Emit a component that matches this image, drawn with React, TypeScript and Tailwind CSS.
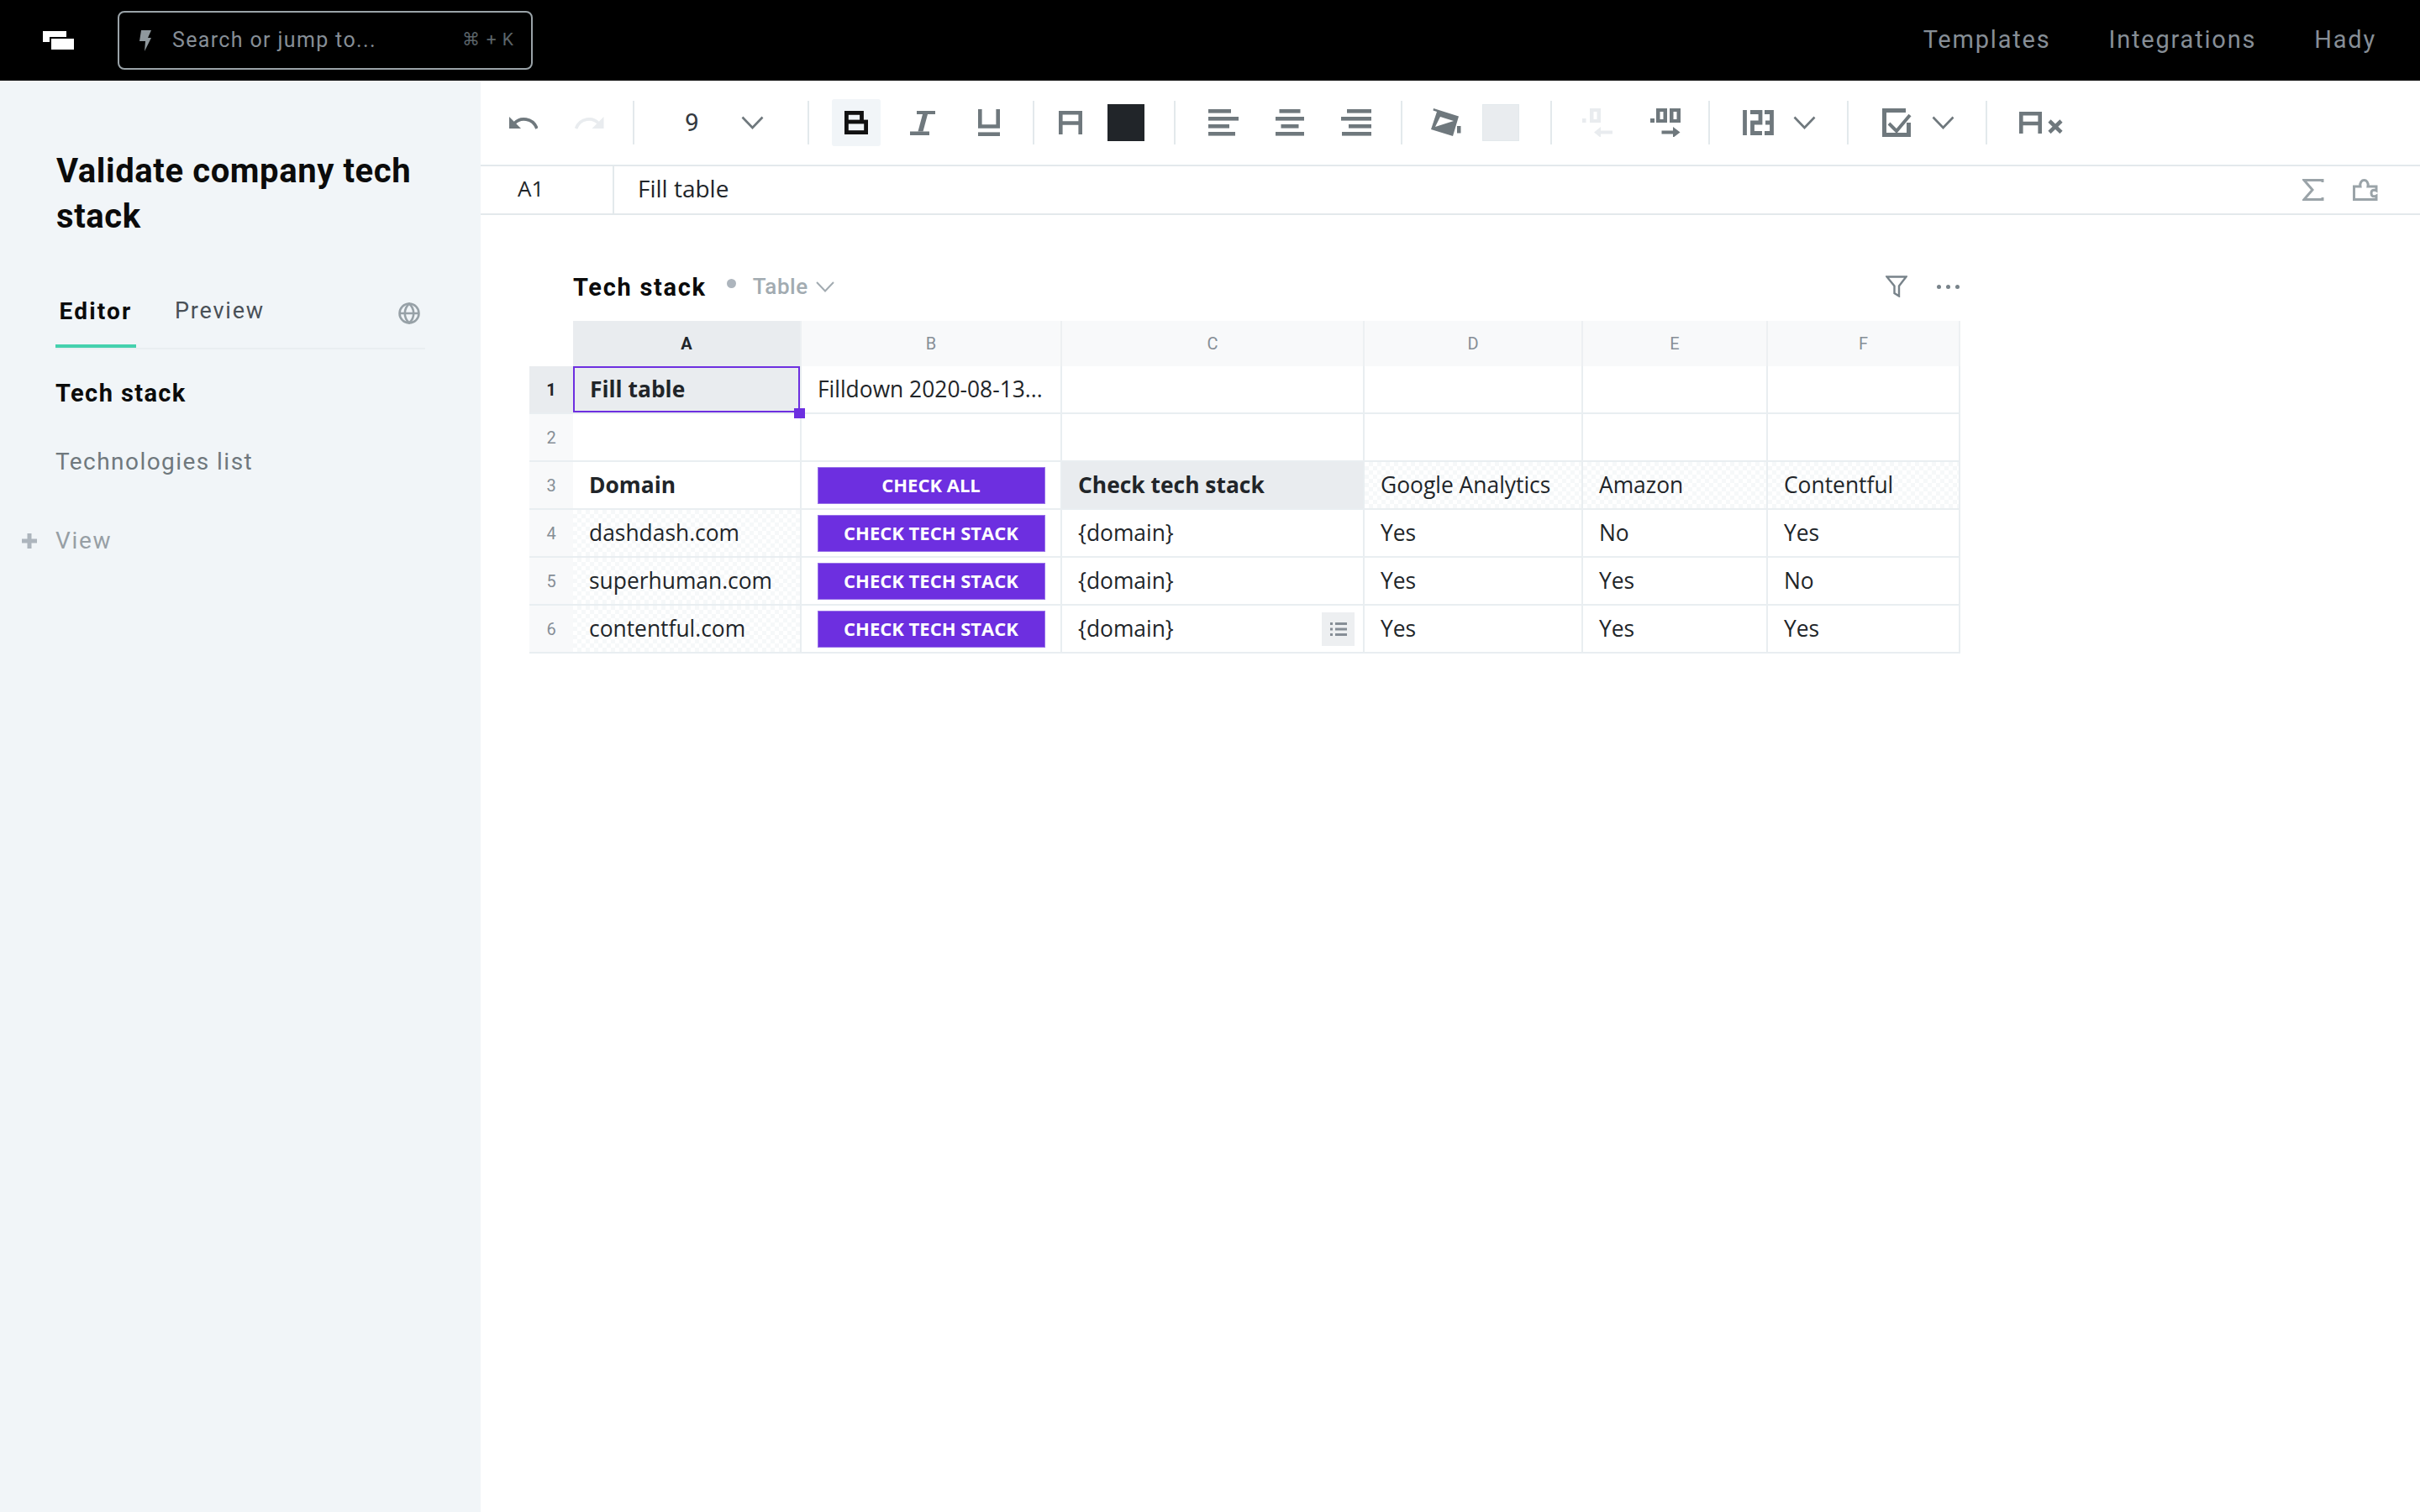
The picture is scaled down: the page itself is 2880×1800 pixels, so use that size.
import React from "react";

const C = "#6f787d";
const GROTESK = "font-['Roboto',sans-serif]";
const OPEN = "font-['Open_Sans',sans-serif]";

function Chevron({ cls = "ml-[24px]" }: { cls?: string }) {
  return (
    <svg className={`${cls} shrink-0`} width="27" height="16" viewBox="0 0 27 16" fill="none">
      <path d="M1.5 1.5 13.5 14 25.5 1.5" stroke={C} strokeWidth="2.6" />
    </svg>
  );
}

function Divider({ ml }: { ml: string }) {
  return <div className={`${ml} w-[2px] h-[52px] bg-[#e3e9ec] shrink-0`} />;
}

function Lines({ cls, widths, align }: { cls: string; widths: number[]; align: "l" | "c" | "r" }) {
  const W = Math.max(...widths);
  const ys = [0, 9, 18, 27];
  return (
    <svg className={`${cls} shrink-0`} width={W} height="32" viewBox={`0 0 ${W} 32`} fill={C}>
      {widths.map((w, i) => (
        <rect key={i} x={align === "l" ? 0 : align === "c" ? (W - w) / 2 : W - w} y={ys[i]} width={w} height="4.6" />
      ))}
    </svg>
  );
}

function Toolbar() {
  return (
    <div className="h-[102px] flex items-center border-b-2 border-[#e3e9ec] shrink-0">
      <svg className="ml-[34px] shrink-0" width="34" height="16" viewBox="0 0 34 16" fill={C}>
        <path d="M0 1v14h14z" />
        <path d="M6 9C13 1 28 2 33 15" fill="none" stroke={C} strokeWidth="3.6" />
      </svg>
      <svg className="ml-[43px] shrink-0" width="37" height="16" viewBox="0 0 34 16" fill="#e9ecef">
        <path d="M34 1v14H20z" />
        <path d="M28 9C21 1 6 2 1 15" fill="none" stroke="#e9ecef" strokeWidth="3.6" />
      </svg>
      <Divider ml="ml-[33px]" />
      <span className={`ml-[60px] w-[16px] text-[30px] leading-none text-[#343a40] ${GROTESK}`}>9</span>
      <Chevron cls="ml-[51px]" />
      <Divider ml="ml-[52px]" />
      <div className="ml-[27px] w-[58px] h-[56px] rounded-[3px] bg-[#f1f5f8] flex items-center justify-center shrink-0">
        <svg width="28" height="28" viewBox="0 0 28 28" fill="none" stroke="#111" strokeWidth="4.8">
          <path d="M2.400 13V2.400H20.500V13" />
          <rect x="2.400" y="13" width="23.200" height="12.600" />
        </svg>
      </div>
      <svg className="ml-[35px] shrink-0" width="30" height="29" viewBox="0 0 30 29" fill={C}>
        <path d="M8 0h22v4H8zM0 24.5h23V29H0z" />
        <path d="M15 4h6l-5.500 20.500h-6z" />
      </svg>
      <svg className="ml-[51px] shrink-0" width="26" height="32" viewBox="0 0 26 32" fill="none" stroke={C} strokeWidth="4.600">
        <path d="M2.300 0V20.500H23.700V0" />
        <path d="M0 29.700H26" />
      </svg>
      <Divider ml="ml-[39px]" />
      <svg className="ml-[29px] shrink-0" width="28" height="28" viewBox="0 0 28 28" fill="none" stroke={C} strokeWidth="4.600">
        <path d="M2.300 28V2.300H25.700V28M2.300 14.500H25.700" />
      </svg>
      <div className="ml-[30px] w-[44px] h-[44px] bg-[#212529] shrink-0" />
      <Divider ml="ml-[35px]" />
      <Lines cls="ml-[39px]" widths={[27, 36, 25, 32]} align="l" />
      <Lines cls="ml-[44px]" widths={[25, 34, 21, 34]} align="c" />
      <Lines cls="ml-[44px]" widths={[29, 36, 27, 35]} align="r" />
      <Divider ml="ml-[35px]" />
      <svg className="ml-[34px] shrink-0" width="36" height="34" viewBox="0 0 36 34" fill={C}>
        <path d="M3 0 33 9.500 26 33 0 25 7 4 2.500 2.500z" />
        <path d="M11 10 27 15 5 22z" fill="#fff" />
        <rect x="31" y="21" width="4.500" height="8.500" />
      </svg>
      <div className="ml-[25px] w-[44px] h-[44px] bg-[#e9ecef] border border-[#e3e9ec] shrink-0" />
      <Divider ml="ml-[37px]" />
      <svg className="ml-[36px] shrink-0" width="37" height="34" viewBox="0 0 37 34" fill="#e9ecef">
        <rect x="0" y="12" width="4.500" height="5" />
        <path fillRule="evenodd" d="M9 0h13v17H9zM13.500 4v9h4V4z" />
        <path d="M14 28.500 22 22v4.500h14v4H22V35z" />
      </svg>
      <svg className="ml-[44px] shrink-0" width="36" height="34" viewBox="0 0 36 34" fill={C}>
        <rect x="0" y="12" width="5" height="5" />
        <path fillRule="evenodd" d="M7 0h13v17H7zM11.500 4v9h4V4zM23 0h13v17H23zM27.500 4v9h4V4z" />
        <path d="M35.500 28.500 27 22v4.500H13.500v4H27V35z" />
      </svg>
      <Divider ml="ml-[33px]" />
      <svg className="ml-[39px] shrink-0" width="37" height="30" viewBox="0 0 37 30" fill="none" stroke={C} strokeWidth="4.800">
        <path d="M2.500 0V30" />
        <path d="M9 2.500H21V15H11.500V27.500H23" />
        <path d="M26 2.500H34.500V27.500H26M27 15H34.500" />
      </svg>
      <Chevron cls="ml-[23px]" />
      <Divider ml="ml-[37px]" />
      <svg className="ml-[40px] shrink-0" width="35" height="34" viewBox="0 0 35 34" fill="none" stroke={C}>
        <path d="M28 2.500H2.500V31.500H31.500V17" strokeWidth="5" />
        <path d="M8 18 17 27 33 8" strokeWidth="4" />
      </svg>
      <Chevron />
      <Divider ml="ml-[37px]" />
      <svg className="ml-[38px] shrink-0" width="52" height="26" viewBox="0 0 52 26" fill="none" stroke={C} strokeWidth="4.600">
        <path d="M2.300 26V2.300H24.700V26M2.300 14H24.700" />
        <path d="M36 11 50 24.500M50 11 36 24.500" />
      </svg>
    </div>
  );
}

function FormulaBar() {
  return (
    <div className={`h-[58px] flex items-center border-b-2 border-[#e3e9ec] shrink-0 text-[#212529] ${OPEN}`}>
      <div className="w-[159px] h-full pb-[4px] pl-[44px] text-[26px] flex items-center border-r-2 border-[#e3e9ec] shrink-0">A1</div>
      <div className="pl-[28px] pb-[4px] text-[28px] flex-1">Fill table</div>
      <svg className="shrink-0" width="26" height="26" viewBox="0 0 26 26" fill="none" stroke="#9aa3a8" strokeWidth="3">
        <path d="M24 4V1.500H2L12 13 2 24.500H24V22" />
      </svg>
      <svg className="ml-[34px] mr-[50px] shrink-0" width="30" height="26" viewBox="0 0 30 26" fill="none" stroke="#9aa3a8" strokeWidth="3">
        <path d="M1.500 24.500V9H9C8 4 11 1.500 13.500 1.500S19 4 18 9H28V14C24 12 22 14 22 17S24 22 28 20V24.500Z" />
      </svg>
    </div>
  );
}

const checker = "bg-[repeating-conic-gradient(#f6f8f9_0_25%,#fff_0_50%)] bg-[length:10px_10px]";
const line = "border-b-2 border-r-2 border-[#e9eef1]";

function Cell({ children, cls = "" }: { children?: React.ReactNode; cls?: string }) {
  return <div className={`${line} flex items-center pl-[19px] whitespace-nowrap ${cls}`}>{children}</div>;
}

function RowHead({ n, active }: { n: number; active?: boolean }) {
  return (
    <div
      className={`flex items-center justify-center border-b-2 border-[#e9eef1] text-[20px] ${GROTESK} ${
        active ? "bg-[#e9ecef] font-bold text-[#212529]" : "bg-[#f8f9fa] text-[#868e96]"
      }`}
    >
      {n}
    </div>
  );
}

function Btn({ label }: { label: string }) {
  return (
    <div className={`${line} flex items-center justify-center`}>
      <div className="w-[271px] h-[44px] bg-[#6d2fe0] border border-[#9872e8] flex items-center justify-center text-[22px] font-bold text-white">
        {label}
      </div>
    </div>
  );
}

function Head({ l, active }: { l: string; active?: boolean }) {
  return (
    <div
      className={`flex items-center justify-center border-r-2 border-[#edf0f2] text-[20px] ${GROTESK} ${
        active ? "bg-[#e9ecef] font-bold text-[#212529]" : "bg-[#f8f9fa] text-[#868e96]"
      }`}
    >
      {l}
    </div>
  );
}

function Sheet() {
  return (
    <div className="pl-[58px] pt-[58px]">
      <div className="w-[1702px] pl-[52px] h-[54px] mb-[14px] flex items-center">
        <span className={`pt-[3px] text-[29px] font-bold tracking-[1.7px] text-[#0b0b0b] ${GROTESK}`}>Tech stack</span>
        <span className="ml-[24px] -mt-[7px] w-[11px] h-[11px] rounded-full bg-[#adb5bd]" />
        <span className={`ml-[20px] text-[26px] font-medium tracking-[0.5px] text-[#a2abb1] ${GROTESK}`}>Table</span>
        <svg className="ml-[9px]" width="22" height="13" viewBox="0 0 22 13" fill="none">
          <path d="M1 1 11 11.500 21 1" stroke="#a2abb1" strokeWidth="2" />
        </svg>
        <svg className="ml-auto" width="26" height="26" viewBox="0 0 26 26" fill="none" stroke="#78838a" strokeWidth="2.400">
          <path d="M1.500 1.500H24.500L16 12.500V24.500L10.500 21V12.500Z" />
        </svg>
        <svg className="ml-[35px]" width="27" height="5" viewBox="0 0 27 5" fill="#78838a">
          <rect x="0" y="0" width="5" height="5" rx="2.500" />
          <rect x="11" y="0" width="5" height="5" rx="2.500" />
          <rect x="22" y="0" width="5" height="5" rx="2.500" />
        </svg>
      </div>
      <div
        className={`grid w-[1703px] grid-cols-[52px_272px_310px_360px_260px_220px_229px] grid-rows-[54px_57px_57px_57px_57px_57px_57px] text-[26.4px] text-[#212529] ${OPEN}`}
      >
        <div />
        <Head l="A" active />
        <Head l="B" />
        <Head l="C" />
        <Head l="D" />
        <Head l="E" />
        <Head l="F" />

        <RowHead n={1} active />
        <div className={line}>
          <div className="relative h-full border-2 border-[#6d2fe0] bg-[#e9ecef] flex items-center pl-[18px] font-bold">
            Fill table
            <div className="absolute -right-[8px] -bottom-[9px] w-[13px] h-[12px] bg-[#6d2fe0] z-10" />
          </div>
        </div>
        <Cell>Filldown 2020-08-13...</Cell>
        <Cell />
        <Cell />
        <Cell />
        <Cell />

        <RowHead n={2} />
        <Cell />
        <Cell />
        <Cell />
        <Cell />
        <Cell />
        <Cell />

        <RowHead n={3} />
        <Cell cls="font-bold">Domain</Cell>
        <Btn label="CHECK ALL" />
        <Cell cls="font-bold bg-[#e9ecef]">Check tech stack</Cell>
        <Cell cls={checker}>Google Analytics</Cell>
        <Cell cls={checker}>Amazon</Cell>
        <Cell cls={checker}>Contentful</Cell>

        <RowHead n={4} />
        <Cell cls={checker}>dashdash.com</Cell>
        <Btn label="CHECK TECH STACK" />
        <Cell>{"{domain}"}</Cell>
        <Cell>Yes</Cell>
        <Cell>No</Cell>
        <Cell>Yes</Cell>

        <RowHead n={5} />
        <Cell cls={checker}>superhuman.com</Cell>
        <Btn label="CHECK TECH STACK" />
        <Cell>{"{domain}"}</Cell>
        <Cell>Yes</Cell>
        <Cell>Yes</Cell>
        <Cell>No</Cell>

        <RowHead n={6} />
        <Cell cls={checker}>contentful.com</Cell>
        <Btn label="CHECK TECH STACK" />
        <Cell cls="justify-between pr-[10px]">
          {"{domain}"}
          <div className="w-[39px] h-[40px] bg-[#edeff1] flex items-center justify-center">
            <svg width="20" height="18" viewBox="0 0 20 18" fill="#868e96">
              <rect x="0" y="1" width="3" height="3" />
              <rect x="6" y="1" width="14" height="3" />
              <rect x="0" y="7.500" width="3" height="3" />
              <rect x="6" y="7.500" width="14" height="3" />
              <rect x="0" y="14" width="3" height="3" />
              <rect x="6" y="14" width="14" height="3" />
            </svg>
          </div>
        </Cell>
        <Cell>Yes</Cell>
        <Cell>Yes</Cell>
        <Cell>Yes</Cell>
      </div>
    </div>
  );
}

function Sidebar() {
  return (
    <aside className={`w-[572px] shrink-0 bg-[#f1f5f8] pt-[81px] ${GROTESK}`}>
      <h1 className="ml-[67px] w-[470px] text-[40px] leading-[54px] font-bold tracking-[0.6px] text-[#0b0b0b]">
        Validate company tech stack
      </h1>
      <div className="ml-[66px] mt-[60px] w-[440px] h-[71px] flex items-start border-b-2 border-[#e9eef1]">
        <div className="w-[96px] h-[69px] flex justify-center pt-[5px] border-b-4 border-[#45d1ae] text-[28px] font-bold tracking-[2.2px] text-[#0b0b0b]">
          Editor
        </div>
        <div className="ml-[46px] pt-[5px] text-[27px] tracking-[1.8px] text-[#495057]">Preview</div>
        <svg className="ml-auto mr-[6px] mt-[15px]" width="26" height="26" viewBox="0 0 26 26" fill="none" stroke="#97a1a7" strokeWidth="2.600">
          <circle cx="13" cy="13" r="11.500" />
          <path d="M1.500 13H24.500M13 1.500C6 8 6 18 13 24.500C20 18 20 8 13 1.500Z" />
        </svg>
      </div>
      <div className="ml-[66px] mt-[31px] text-[29px] leading-[42px] font-bold tracking-[1.4px] text-[#0b0b0b]">Tech stack</div>
      <div className="ml-[66px] mt-[40px] text-[28px] leading-[42px] tracking-[1.45px] text-[#6f787d]">Technologies list</div>
      <div className="ml-[26px] mt-[52px] flex items-center text-[28px] leading-[42px] tracking-[1.7px] text-[#979fa5]">
        <svg width="18" height="18" viewBox="0 0 18 18" fill="#adb5bd">
          <path d="M6.500 0h5v6.500h6.500v5h-6.500v6.500h-5v-6.500H0v-5h6.500z" />
        </svg>
        <span className="ml-[22px]">View</span>
      </div>
    </aside>
  );
}

function TopBar() {
  return (
    <header className={`h-[96px] bg-black flex items-center shrink-0 ${GROTESK}`}>
      <svg className="ml-[51px] shrink-0" width="37" height="22" viewBox="0 0 37 22" fill="#fff">
        <rect x="0" y="0" width="28" height="13" />
        <rect x="8" y="7" width="29" height="15" fill="#000" />
        <rect x="10" y="9" width="27" height="13" />
      </svg>
      <div className="ml-[52px] w-[494px] h-[70px] rounded-[8px] border-2 border-[#9aa3a8] flex items-center pl-[24px] pr-[20px]">
        <svg width="14" height="25" viewBox="0 0 14 25" fill="#8f989d">
          <path d="M2 0h12l-4 9h4L6 25l1-12H0z" />
        </svg>
        <span className="ml-[25px] text-[25px] tracking-[1.35px] text-[#868e96]">Search or jump to...</span>
        <span className="ml-auto text-[21px] tracking-[1px] text-[#5b6469]">⌘ + K</span>
      </div>
      <nav className="ml-auto flex items-center gap-[69px] pr-[52px] text-[29px] tracking-[1.8px] text-[#868e96]">
        <span>Templates</span>
        <span>Integrations</span>
        <span>Hady</span>
      </nav>
    </header>
  );
}

export default function App() {
  return (
    <div className="h-screen flex flex-col bg-white overflow-hidden">
      <TopBar />
      <div className="flex-1 flex min-h-0">
        <Sidebar />
        <main className="flex-1 min-w-0">
          <Toolbar />
          <FormulaBar />
          <Sheet />
        </main>
      </div>
    </div>
  );
}
